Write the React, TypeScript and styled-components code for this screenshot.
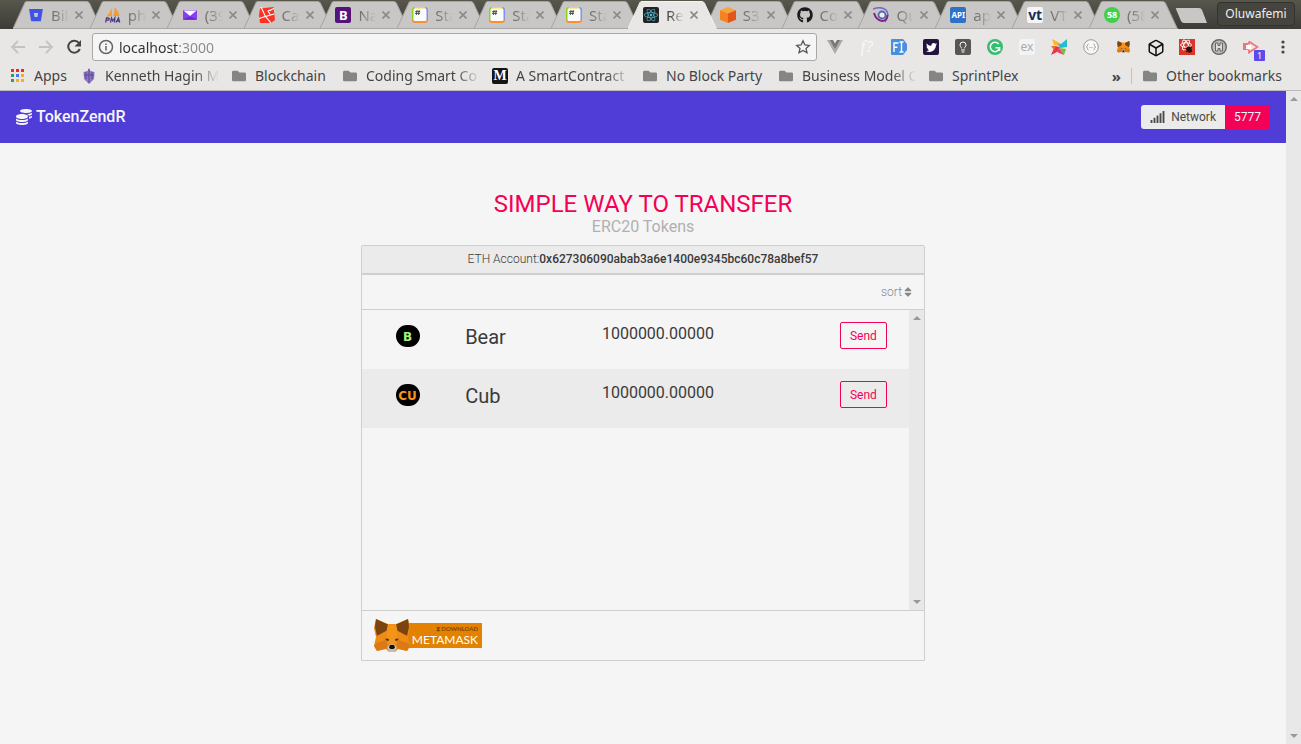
import React from "react";
import styled, { createGlobalStyle, css } from "styled-components";
import {
  FaBitbucket, FaCoins, FaFolder, FaGithub, FaReact, FaSignal, FaSort, FaTwitter,
} from "react-icons/fa";
import { Box, Lightbulb } from "lucide-react";

const uiFont = `"Noto Sans", "Open Sans", sans-serif`;
const pageFont = `Roboto, "Liberation Sans", sans-serif`;

const GlobalStyle = createGlobalStyle`
  *, *::before, *::after { box-sizing: border-box; }
  html, body { margin: 0; padding: 0; background: #f5f5f5; }
  button, input { font: inherit; margin: 0; padding: 0; }
  svg { display: block; flex: none; }
`;

/* ---------- Browser frame ---------- */

const Window = styled.div`
  display: flex;
  flex-direction: column;
  min-height: 100vh;
`;

const TabStrip = styled.div`
  display: flex;
  align-items: flex-end;
  height: 29px;
  padding-left: 13px;
  background: linear-gradient(#58574c, #3c3b37);
  font-family: ${uiFont};
  overflow: hidden;
`;

const TabList = styled.div`
  display: flex;
  flex: 1;
  min-width: 0;
`;

const Tab = styled.div<{ $active?: boolean }>`
  display: grid;
  flex: 1 1 0;
  min-width: 0;
  height: 28px;
  margin-right: -12px;
  z-index: ${(p) => (p.$active ? 1 : 0)};
  color: ${(p) => (p.$active ? "#4d4d4d" : "#757575")};
  > * { grid-area: 1 / 1; }
`;

const TabContent = styled.div`
  display: flex;
  align-items: center;
  padding-left: 15px;
`;

const FadeText = styled.span<{ $width: number; $fade?: boolean }>`
  width: ${(p) => p.$width}px;
  overflow: hidden;
  white-space: nowrap;
  ${(p) => p.$fade && css`mask-image: linear-gradient(to left, transparent, #000 24px);`}
`;

const TabTitle = styled.button`
  width: 18px;
  margin-left: 7px;
  border: 0;
  background: none;
  color: inherit;
  font-size: 15px;
  line-height: 20px;
  text-align: left;
  overflow: hidden;
  white-space: nowrap;
  mask-image: linear-gradient(to left, transparent, #000 14px);
`;

const CloseButton = styled.button`
  display: grid;
  place-items: center;
  width: 14px;
  height: 14px;
  margin-left: 3px;
  border: 0;
  background: none;
  color: #8b8b8b;
`;

const NewTab = styled.button`
  flex: none;
  width: 33px;
  height: 15px;
  margin: 0 9px 6px;
  border: 0;
  background: none;
`;

const UserButton = styled.button`
  flex: none;
  width: 78px;
  height: 24px;
  margin: 0 6px 3px 0;
  border: 1px solid #33322e;
  border-radius: 4px;
  background: #45443e;
  color: #efeee9;
  font-size: 12px;
  line-height: 20px;
`;

const Toolbar = styled.div`
  display: flex;
  align-items: center;
  height: 34px;
  padding: 2px 10px 0;
  background: #e9e7e6;
  font-family: ${uiFont};
  color: #444;
`;

const NavButton = styled.button`
  display: grid;
  place-items: center;
  width: 16px;
  height: 28px;
  margin-right: 12px;
  border: 0;
  background: none;
`;

const AddressBar = styled.label`
  display: flex;
  flex: 1;
  align-items: center;
  height: 28px;
  margin: 0 10px 0 -2px;
  padding: 0 5px;
  border: 1px solid #a9a8a7;
  border-radius: 3px;
  background: #f5f5f5;
`;

const AddressInput = styled.input`
  flex: 1;
  min-width: 0;
  height: 24px;
  margin-left: 5px;
  border: 0;
  outline: 0;
  background: linear-gradient(to right, #303030 59px, #8a8a8a 59px) text;
  color: transparent;
  font-size: 14px;
  line-height: 22px;
`;

const Extensions = styled.div`
  display: flex;
  gap: 16px;
  align-items: center;
`;

const ExtensionButton = styled.button`
  display: grid;
  place-items: center;
  position: relative;
  width: 16px;
  height: 16px;
  border: 0;
  background: none;
  color: #444;
`;

const ExtensionBadge = styled.span`
  position: absolute;
  left: 11px;
  top: 11px;
  width: 11px;
  height: 11px;
  border-radius: 1px;
  background: #5b4bea;
  color: #fff;
  font-size: 9px;
  line-height: 11px;
  text-align: center;
`;

const Tile = styled.span<{
  $bg: string; $color?: string; $round?: boolean; $size?: number; $light?: boolean; $serif?: boolean;
}>`
  display: grid;
  place-items: center;
  flex: none;
  width: 16px;
  height: 16px;
  border-radius: ${(p) => (p.$round ? "50%" : "2px")};
  background: ${(p) => p.$bg};
  color: ${(p) => p.$color ?? "#fff"};
  font-size: ${(p) => p.$size ?? 10}px;
  font-weight: ${(p) => (p.$light ? 400 : 700)};
  line-height: 16px;
  ${(p) => p.$serif && css`font-family: "Liberation Serif", serif;`}
`;

const BookmarkBar = styled.nav`
  display: flex;
  align-items: center;
  gap: 12px;
  height: 28px;
  padding: 0 14px 1px 10px;
  border-bottom: 1px solid #bababa;
  background: #e9e7e6;
  font-family: ${uiFont};
  font-size: 14px;
  line-height: 20px;
`;

const Bookmark = styled.a`
  display: flex;
  align-items: center;
  gap: 8px;
  flex: none;
  color: #444;
  text-decoration: none;
`;

const BookmarkIcon = styled.span`
  display: grid;
  place-items: center;
  width: 16px;
  height: 16px;
  color: #858585;
`;

const BookmarkOverflow = styled.button`
  margin-left: auto;
  border: 0;
  background: none;
  color: #444;
  font-size: 15px;
  font-weight: 700;
  line-height: 18px;
`;

const BookmarkDivider = styled.span`
  width: 1px;
  height: 16px;
  margin: 0 -2px;
  background: #c4c2c1;
`;

/* ---------- Page ---------- */

const Viewport = styled.div`
  display: flex;
  flex: 1;
  font-family: ${pageFont};
  color: #3a3a3a;
`;

const Page = styled.div`
  flex: 1;
  min-width: 0;
  background: #f5f5f5;
`;

const Scrollbar = styled.div`
  display: flex;
  flex-direction: column;
  align-items: center;
  justify-content: space-between;
  flex: none;
  width: 15px;
  padding: 6px 0;
  background: #e8e8e8;
  color: #999;
`;

const Navbar = styled.header`
  display: flex;
  align-items: center;
  justify-content: space-between;
  height: 52px;
  padding: 0 16px;
  background: #503cd6;
`;

const Brand = styled.a`
  display: flex;
  align-items: center;
  gap: 4px;
  color: #f5f5f5;
  font-size: 16px;
  font-weight: 500;
  line-height: 20px;
  text-decoration: none;
`;

const NetworkTags = styled.div`
  display: flex;
  border-radius: 3px;
  overflow: hidden;
  font-size: 12px;
  line-height: 24px;
`;

const NetworkTag = styled.span<{ $accent?: boolean }>`
  display: flex;
  align-items: center;
  gap: 6px;
  padding: 0 9px;
  background: ${(p) => (p.$accent ? "#f50057" : "#ebebeb")};
  color: ${(p) => (p.$accent ? "#f5f5f5" : "#4a4a4a")};
`;

const Main = styled.main`
  width: 100%;
  max-width: 564px;
  margin: 0 auto;
  padding: 49px 0 24px;
`;

const Title = styled.h1`
  margin: 0;
  color: #f50057;
  font-size: 24px;
  font-weight: 400;
  line-height: 24px;
  text-align: center;
`;

const Subtitle = styled.p`
  margin: 0 0 7px;
  color: #b0b0b0;
  font-size: 16px;
  line-height: 22px;
  text-align: center;
`;

const Card = styled.section`
  border: 1px solid #cfcfcf;
  border-radius: 2px 2px 0 0;
`;

const Account = styled.div`
  padding-bottom: 1px;
  border-bottom: 2px solid #cfcfcf;
  background: #ebebeb;
  font-size: 12px;
  font-weight: 300;
  line-height: 26px;
  text-align: center;
  strong { font-weight: 500; }
`;

const SortRow = styled.div`
  display: flex;
  align-items: center;
  justify-content: flex-end;
  height: 35px;
  padding-right: 10px;
  border-bottom: 1px solid #cfcfcf;
`;

const SortButton = styled.button`
  display: flex;
  align-items: center;
  border: 0;
  background: none;
  color: #888;
  font-size: 12px;
  font-weight: 300;
  line-height: 16px;
`;

const ListPane = styled.div`
  display: flex;
  height: 300px;
`;

const TokenList = styled.ul`
  flex: 1;
  margin: 0;
  padding: 0;
  list-style: none;
`;

const TokenRow = styled.li`
  display: grid;
  grid-template-columns: 2fr 3fr 5fr 2fr;
  align-items: start;
  height: 59px;
  padding-top: 12px;
  &:nth-child(even) { background: #ebebeb; }
`;

const TokenBadge = styled.span<{ $color: string }>`
  justify-self: center;
  width: 24px;
  height: 22px;
  margin-top: 3px;
  border-radius: 11px;
  background: #000;
  color: ${(p) => p.$color};
  font-family: "DejaVu Sans", "Open Sans", sans-serif;
  font-size: 12px;
  font-weight: 700;
  line-height: 24px;
  text-align: center;
`;

const TokenName = styled.span`
  padding: 3px 12px 0;
  font-size: 20px;
  line-height: 24px;
`;

const TokenAmount = styled.span`
  padding: 2px 12px 0;
  font-size: 16px;
  line-height: 20px;
`;

const SendButton = styled.button`
  justify-self: center;
  width: 47px;
  height: 27px;
  border: 1px solid #f50057;
  border-radius: 2px;
  background: transparent;
  color: #f50057;
  font-size: 12px;
`;

const CardFooter = styled.footer`
  display: flex;
  align-items: center;
  height: 50px;
  padding: 0 12px;
  border-top: 1px solid #cfcfcf;
`;

const MetaMaskLink = styled.a`
  display: flex;
  align-items: center;
  text-decoration: none;
  svg { z-index: 1; }
`;

const MetaMaskLabel = styled.span`
  display: flex;
  flex-direction: column;
  align-items: flex-end;
  width: 80px;
  height: 25px;
  margin-left: -8px;
  padding: 2px 4px 0 0;
  background: #e38200;
  color: #fff;
  font-family: Lato, sans-serif;
  font-size: 12px;
  line-height: 14px;
`;

const DownloadText = styled.span`
  color: #804600;
  font-size: 6px;
  font-weight: 700;
  line-height: 8px;
`;

/* ---------- Drawings ---------- */

const TabShape = ({ active }: { active?: boolean }) => (
  <svg width="100%" height="28" viewBox="0 0 89 28" preserveAspectRatio="none">
    <path d="M0 28 L12 1.5 Q12.500 .5 14 .5 H74 Q75.500 .5 76.500 2 L88.500 28 Z" fill={active ? "#e9e7e6" : "#c9c7c5"} />
    <path d="M0 27.500 L12 1.500 Q12.500 .5 14 .5 H74 Q75.500 .5 76.500 2 L88.500 27.500" fill="none" stroke={active ? "#f4f3f2" : "#a6a4a1"} />
    {!active && <path d="M0 27.500 H89" stroke="#aaa8a6" />}
  </svg>
);

const Cross = () => (
  <svg width="8" height="8" viewBox="0 0 8 8"><path d="M.5 .5 7.500 7.500M7.500 .5 .5 7.500" stroke="currentColor" strokeWidth="1.600" /></svg>
);

const Arrow = ({ down }: { down?: boolean }) => (
  <svg width="8" height="4" viewBox="0 0 8 4"><path d={down ? "M0 0H8L4 4Z" : "M0 4H8L4 0Z"} fill="currentColor" /></svg>
);

const PmaIcon = () => (
  <svg width="16" height="16" viewBox="0 0 16 16">
    <path d="M6.500 1 7 9 1.500 9.500Q5 6 6.500 1ZM9.500 0Q14 5 14.500 9L8 9Q10 5 9.500 0Z" fill="#f29b33" />
    <path d="M.7 15.500 1.500 11H3.500Q5 11.500 3.700 13.200H1.500M5.500 15.500 6.500 11 7.800 14 9.800 11 9.500 15.500M11 15.500 13.500 11 14.700 15.500M12 14H14.500" fill="none" stroke="#4b3a86" strokeWidth="1.300" />
  </svg>
);

const MailIcon = () => (
  <svg width="16" height="16" viewBox="0 0 16 16">
    <rect x="1" y="3" width="14" height="10" rx="1" fill="#8b3df0" />
    <path d="M1.500 3.500H14.500L8 9Z" fill="#fff" /><path d="M1 12.500 8 9.500 15 12.500Z" fill="#6828c9" />
  </svg>
);

const LaravelIcon = () => (
  <svg width="16" height="16" viewBox="0 0 16 16">
    <path d="M1 1.500 14.500 0 16 13 12 16H1L0 8Z" fill="#fb3325" />
    <path d="M2 0 6.500 9.500 15 7M0 11.500 6.500 9.500 12 16M15 1.500 9 4 11.500 8M9 4 12.500 3" fill="none" stroke="#fff" strokeWidth="1.100" />
  </svg>
);

const HashIcon = () => (
  <svg width="16" height="16" viewBox="0 0 16 16">
    <path d="M3 0H13L14 2H2Z" fill="#f7d63b" /><path d="M3 0Q0 0 0 3V13L2 14V2Z" fill="#86d626" />
    <path d="M13 0Q16 0 16 3V13L14 14V2Z" fill="#7893f4" /><path d="M0 13Q0 16 3 16H13Q16 16 16 13L14 13H2Z" fill="#f49332" />
    <rect x="1.500" y="1.500" width="13" height="12.500" rx="1.500" fill="#fbfbfb" />
    <path d="M5 3 4.400 8M7.200 3 6.600 8M3.200 4.600H8.200M3 6.400H8" stroke="#444" strokeWidth=".9" />
  </svg>
);

const CubeIcon = () => (
  <svg width="16" height="16" viewBox="0 0 16 16">
    <path d="M8 0 16 3.300 8 6.500 0 3.300Z" fill="#f9a33a" /><path d="M0 3.300 8 6.500V16L0 12.700Z" fill="#f58220" />
    <path d="M16 3.300 8 6.500V16L16 12.700Z" fill="#e3551b" />
  </svg>
);

const SwirlIcon = () => (
  <svg width="16" height="16" viewBox="0 0 16 16" fill="none">
    <path d="M0 2Q8-1 13 3Q17 8 12 15" stroke="#7568c8" strokeWidth="1.600" />
    <path d="M1 6Q3 13 9 14Q14 14 14.500 8" stroke="#862477" strokeWidth="2" />
    <circle cx="9" cy="8" r="3.500" stroke="#5068b7" strokeWidth="1.800" fill="#eee" />
  </svg>
);

const FolderIcon = () => <FaFolder size={14} />;

const AppsIcon = () => (
  <svg width="14" height="14" viewBox="0 0 14 14">
    {["#f02b1d", "#f02b1d", "#f02b1d", "#24a454", "#4678ee", "#f2ae28", "#24a454", "#f2ae28", "#f2ae28"].map((fill, i) => (
      <rect key={i} x={(i % 3) * 5} y={Math.floor(i / 3) * 5} width="3" height="3" fill={fill} />
    ))}
  </svg>
);

const CrestIcon = () => (
  <svg width="12" height="16" viewBox="0 0 12 16">
    <path d="M6 0 7.500 3 11.500 4 11 11 6 16 1 11 .5 4 4.500 3Z" fill="#8b78bd" />
    <path d="M6 1V15M3 4V11M9 4V11M1 7H11" stroke="#5f469f" />
  </svg>
);

const InfoIcon = () => (
  <svg width="16" height="16" viewBox="0 0 16 16" fill="none" stroke="#666" strokeWidth="1.500">
    <circle cx="8" cy="8" r="6.500" /><path d="M8 7V11.500M8 4.500V6" />
  </svg>
);

const StarIcon = () => (
  <svg width="16" height="16" viewBox="0 0 16 16">
    <path d="M8 1.800 9.900 6 14.300 6.400 11 9.400 12 13.800 8 11.500 4 13.800 5 9.400 1.700 6.400 6.100 6Z" fill="none" stroke="#555" strokeWidth="1.300" />
  </svg>
);

const VueIcon = () => (
  <svg width="16" height="14" viewBox="0 0 16 14"><path d="M0 0H4L8 7 12 0H16L8 14Z" fill="#a9a9a9" /><path d="M3 0H6L8 3.500 10 0H13L8 9Z" fill="#777" /></svg>
);

const FormIcon = () => (
  <svg width="16" height="16" viewBox="0 0 16 16">
    <path d="M1 0H12L16 5V11L12 16H1Q0 16 0 15V1Q0 0 1 0Z" fill="#4a8fdd" />
    <path d="M3 13V4H7.500M3 8.300H6.500M8.500 3H12.500M10.500 3V13M8.500 13H12.500" fill="none" stroke="#fff" strokeWidth="1.400" />
  </svg>
);

const GrammarlyIcon = () => (
  <svg width="16" height="16" viewBox="0 0 16 16">
    <circle cx="8" cy="8" r="8" fill="#35bd72" />
    <path d="M11.700 5A4.700 4.700 0 1 0 12.600 9M8.500 8.800H12.600V12" fill="none" stroke="#fff" strokeWidth="1.500" />
  </svg>
);

const PinwheelIcon = () => (
  <svg width="16" height="16" viewBox="0 0 16 16">
    <path d="M1 0 7 3 9 7 3 6Z" fill="#ffb71b" /><path d="M16 0V8L9 9 7 4 10 5Z" fill="#21bdd0" />
    <path d="M0 16 4 7 9 8 6 13Z" fill="#ed3447" /><path d="M0 7H5L3 11Z" fill="#f06a2c" />
    <path d="M8 9 15 10 13 16Z" fill="#78be38" /><path d="M6 13 8 9 13 16Z" fill="#e83e68" />
  </svg>
);

const FoxIcon = ({ width, height }: { width: number; height: number }) => (
  <svg width={width} height={height} viewBox="0 0 36 33">
    <path d="M2 0 14 5H22L34 0 36 9 34 18 36 27 33 32 24 30 21 33H15L12 30 3 32 0 27 2 18 0 9Z" fill="#ea8a1d" />
    <path d="M2 0 15 6 13 12 3 17 1 8ZM34 0 21 6 23 12 33 17 35 8Z" fill="#7b4310" />
    <path d="M14 5H22L24 14 21 25H15L12 14Z" fill="#f39519" />
    <path d="M3 17 12 12 14 20 2 24ZM33 17 24 12 22 20 34 24Z" fill="#f08c16" />
    <path d="M2 24 12 21 14 29 3 32 0 27ZM34 24 24 21 22 29 33 32 36 27Z" fill="#dc7914" />
    <path d="M11 19.500 15 20 14.500 22 12.500 21.500ZM25 19.500 21 20 21.500 22 23.500 21.500Z" fill="#44352a" />
    <path d="M13 28 16 25.500H20L23 28 21 33H15Z" fill="#c8bcb2" />
    <path d="M16 26H20L21 28.500 19.500 30H16.500L15 28.500Z" fill="#111" />
  </svg>
);

const BeeIcon = () => (
  <svg width="16" height="16" viewBox="0 0 16 16">
    <rect width="16" height="16" fill="#d9372b" />
    <g fill="none" stroke="#fff" strokeWidth=".9"><ellipse cx="7" cy="6" rx="5.500" ry="2.200" /><ellipse cx="7" cy="6" rx="5.500" ry="2.200" transform="rotate(60 7 6)" /><ellipse cx="7" cy="6" rx="5.500" ry="2.200" transform="rotate(120 7 6)" /></g>
    <ellipse cx="10" cy="10.500" rx="2.600" ry="3.300" fill="#2b1110" transform="rotate(-30 10 10.500)" /><path d="M6 9 13 13M13 8 7 13" stroke="#2b1110" />
  </svg>
);

const RecordIcon = () => (
  <svg width="16" height="14" viewBox="0 0 16 14">
    <path d="M0 3H5V10H0Z" fill="#f0747b" /><path d="M6 1.500 14.500 7 6 12.500V9.500M6 4.500V1.500" fill="none" stroke="#f0747b" strokeWidth="1.800" />
    <path d="M3 5H8V9H3Z" fill="#fff" />
  </svg>
);

const BracesIcon = () => (
  <svg width="16" height="16" viewBox="0 0 16 16" fill="none" stroke="#999"><circle cx="8" cy="8" r="7.300" fill="#f7f7f7" /><path d="M5.500 5Q4.500 5 4.500 6.500L3.500 8 4.500 9.500Q4.500 11 5.500 11M10.500 5Q11.500 5 11.500 6.500L12.500 8 11.500 9.500Q11.500 11 10.500 11M6.500 8.500H7.500M8.500 8.500H9.500" /></svg>
);

const HexIcon = () => (
  <svg width="16" height="16" viewBox="0 0 16 16" fill="none" stroke="#666"><circle cx="8" cy="8" r="7.300" fill="#bcbcbc" strokeWidth="1.400" /><path d="M4.500 4H7V6.500H9V4H11.500V12H9V9.500H7V12H4.500Z" fill="#ddd" /></svg>
);

/* ---------- Data ---------- */

const tabs: { title: string; icon: React.ReactNode; active?: boolean }[] = [
  { title: "Bil", icon: <FaBitbucket size={14} color="#4053e8" /> },
  { title: "ph", icon: <PmaIcon /> },
  { title: "(39", icon: <MailIcon /> },
  { title: "Ca", icon: <LaravelIcon /> },
  { title: "Na", icon: <Tile $bg="#54137b" $size={13}>B</Tile> },
  { title: "Sta", icon: <HashIcon /> },
  { title: "Sta", icon: <HashIcon /> },
  { title: "Sta", icon: <HashIcon /> },
  { title: "Re", icon: <Tile $bg="#222" $color="#50bdd8"><FaReact size={14} /></Tile>, active: true },
  { title: "S3", icon: <CubeIcon /> },
  { title: "Co", icon: <FaGithub size={16} color="#1b1b1b" /> },
  { title: "Qu", icon: <SwirlIcon /> },
  { title: "ap", icon: <Tile $bg="#2f70c8" $size={8}>API</Tile> },
  { title: "VT", icon: <Tile $bg="#f5f5f5" $color="#152c56" $size={14}>vt</Tile> },
  { title: "(58", icon: <Tile $bg="#42cf4d" $round $size={9}>58</Tile> },
];

const extensions: { name: string; icon: React.ReactNode }[] = [
  { name: "Vue devtools", icon: <VueIcon /> },
  { name: "Font finder", icon: <Tile $bg="transparent" $color="#f8f8f8" $size={16} $light $serif><i>f?</i></Tile> },
  { name: "Form filler", icon: <FormIcon /> },
  { name: "Twitter", icon: <Tile $bg="#25143f"><FaTwitter size={11} /></Tile> },
  { name: "Keep", icon: <Tile $bg="#565656"><Lightbulb size={12} strokeWidth={2} /></Tile> },
  { name: "Grammarly", icon: <GrammarlyIcon /> },
  { name: "Express", icon: <Tile $bg="#f3f3f3" $color="#aaa" $size={12} $light>ex</Tile> },
  { name: "Pinwheel", icon: <PinwheelIcon /> },
  { name: "JSON viewer", icon: <BracesIcon /> },
  { name: "MetaMask", icon: <FoxIcon width={13} height={12} /> },
  { name: "Box", icon: <Box size={18} strokeWidth={2} color="#111" /> },
  { name: "React bee", icon: <BeeIcon /> },
  { name: "H", icon: <HexIcon /> },
  { name: "Recorder", icon: <><RecordIcon /><ExtensionBadge>1</ExtensionBadge></> },
];

const bookmarks: { label: string; width: number; icon: React.ReactNode; fade?: boolean }[] = [
  { label: "Apps", width: 35, icon: <AppsIcon /> },
  { label: "Kenneth Hagin M", width: 114, icon: <CrestIcon />, fade: true },
  { label: "Blockchain", width: 75, icon: <FolderIcon /> },
  { label: "Coding Smart Co", width: 114, icon: <FolderIcon />, fade: true },
  { label: "A SmartContract", width: 114, icon: <Tile $bg="#151515" $size={14} $serif>M</Tile>, fade: true },
  { label: "No Block Party", width: 100, icon: <FolderIcon /> },
  { label: "Business Model C", width: 114, icon: <FolderIcon />, fade: true },
  { label: "SprintPlex", width: 75, icon: <FolderIcon /> },
];

const tokens = [
  { symbol: "B", name: "Bear", amount: "1000000.00000", color: "#a5f37b" },
  { symbol: "CU", name: "Cub", amount: "1000000.00000", color: "#f7931a" },
];

export default function App() {
  return (
    <Window>
      <GlobalStyle />
      <TabStrip>
        <TabList>
          {tabs.map((tab, i) => (
            <Tab key={i} $active={tab.active}>
              <TabShape active={tab.active} />
              <TabContent>
                <Tile $bg="transparent">{tab.icon}</Tile>
                <TabTitle>{tab.title}</TabTitle>
                <CloseButton aria-label={`Close ${tab.title}`}><Cross /></CloseButton>
              </TabContent>
            </Tab>
          ))}
        </TabList>
        <NewTab aria-label="New tab">
          <svg width="33" height="15" viewBox="0 0 33 15"><path d="M2 0H24Q26 0 27 2L32 15H9Q7 15 6 13L1 1Q0 0 2 0Z" fill="#c9c7c5" /></svg>
        </NewTab>
        <UserButton>Oluwafemi</UserButton>
      </TabStrip>
      <Toolbar>
        <NavButton aria-label="Back"><svg width="16" height="14" viewBox="0 0 16 14"><path d="M15 7H2M8 1 2 7 8 13" fill="none" stroke="#c4c3c2" strokeWidth="1.800" /></svg></NavButton>
        <NavButton aria-label="Forward"><svg width="16" height="14" viewBox="0 0 16 14"><path d="M1 7H14M8 1 14 7 8 13" fill="none" stroke="#c4c3c2" strokeWidth="1.800" /></svg></NavButton>
        <NavButton aria-label="Reload"><svg width="16" height="16" viewBox="0 0 16 16"><path d="M13 4A6 6 0 1 0 13.800 10" fill="none" stroke="#444" strokeWidth="2" /><path d="M15 1V7.500H8.500Z" fill="#444" /></svg></NavButton>
        <AddressBar>
          <InfoIcon />
          <AddressInput aria-label="Address" defaultValue="localhost:3000" />
          <StarIcon />
        </AddressBar>
        <Extensions>
          {extensions.map((ext) => (
            <ExtensionButton key={ext.name} aria-label={ext.name}>{ext.icon}</ExtensionButton>
          ))}
          <ExtensionButton aria-label="Menu">
            <svg width="4" height="14" viewBox="0 0 4 14" fill="#444"><circle cx="2" cy="2" r="1.600" /><circle cx="2" cy="7" r="1.600" /><circle cx="2" cy="12" r="1.600" /></svg>
          </ExtensionButton>
        </Extensions>
      </Toolbar>
      <BookmarkBar>
        {bookmarks.map((b) => (
          <Bookmark key={b.label} href="#">
            <BookmarkIcon>{b.icon}</BookmarkIcon>
            <FadeText $width={b.width} $fade={b.fade}>{b.label}</FadeText>
          </Bookmark>
        ))}
        <BookmarkOverflow aria-label="More bookmarks">»</BookmarkOverflow>
        <BookmarkDivider />
        <Bookmark href="#">
          <BookmarkIcon><FolderIcon /></BookmarkIcon>
          <FadeText $width={121}>Other bookmarks</FadeText>
        </Bookmark>
      </BookmarkBar>
      <Viewport>
        <Page>
          <Navbar>
            <Brand href="#"><FaCoins size={16} />TokenZendR</Brand>
            <NetworkTags>
              <NetworkTag><FaSignal style={{ width: 15, height: 12 }} />Network</NetworkTag>
              <NetworkTag $accent>5777</NetworkTag>
            </NetworkTags>
          </Navbar>
          <Main>
            <Title>SIMPLE WAY TO TRANSFER</Title>
            <Subtitle>ERC20 Tokens</Subtitle>
            <Card>
              <Account>ETH Account:<strong>0x627306090abab3a6e1400e9345bc60c78a8bef57</strong></Account>
              <SortRow><SortButton>sort<FaSort size={12} /></SortButton></SortRow>
              <ListPane>
                <TokenList>
                  {tokens.map((t) => (
                    <TokenRow key={t.symbol}>
                      <TokenBadge $color={t.color}>{t.symbol}</TokenBadge>
                      <TokenName>{t.name}</TokenName>
                      <TokenAmount>{t.amount}</TokenAmount>
                      <SendButton>Send</SendButton>
                    </TokenRow>
                  ))}
                </TokenList>
                <Scrollbar aria-hidden="true"><Arrow /><Arrow down /></Scrollbar>
              </ListPane>
              <CardFooter>
                <MetaMaskLink href="#">
                  <FoxIcon width={36} height={33} />
                  <MetaMaskLabel><DownloadText>⧗ DOWNLOAD</DownloadText>METAMASK</MetaMaskLabel>
                </MetaMaskLink>
              </CardFooter>
            </Card>
          </Main>
        </Page>
        <Scrollbar aria-hidden="true"><Arrow /><Arrow down /></Scrollbar>
      </Viewport>
    </Window>
  );
}
